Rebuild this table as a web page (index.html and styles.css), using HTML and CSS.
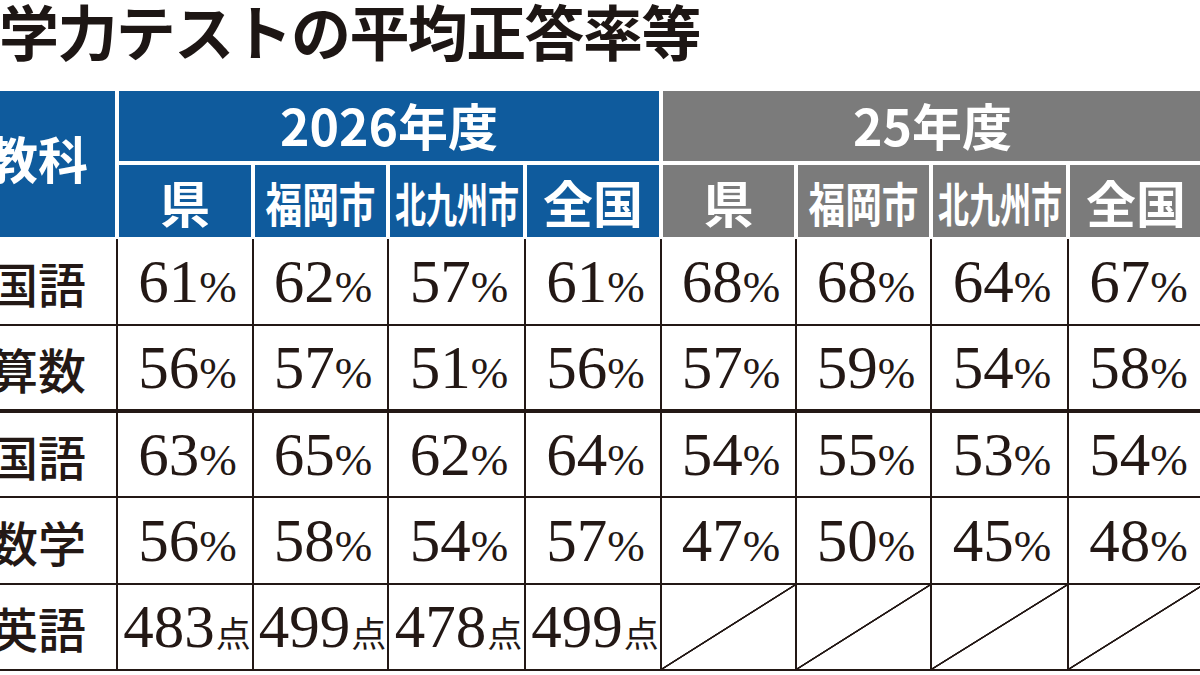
FILE: index.html
```html
<!DOCTYPE html>
<html lang="ja">
<head>
<meta charset="utf-8">
<title>学力テストの平均正答率等</title>
<link rel="stylesheet" href="styles.css">
</head>
<body>
<div class="page">
  <h1 class="title">学力テストの平均正答率等</h1>
  <div class="grid">
    <div class="hd blue subj">教科</div>
    <div class="hd blue year">2026年度</div>
    <div class="hd gray year">25年度</div>

    <div class="hd blue sub">県</div>
    <div class="hd blue sub"><span class="sq3">福岡市</span></div>
    <div class="hd blue sub"><span class="sq4">北九州市</span></div>
    <div class="hd blue sub">全国</div>
    <div class="hd gray sub">県</div>
    <div class="hd gray sub"><span class="sq3">福岡市</span></div>
    <div class="hd gray sub"><span class="sq4">北九州市</span></div>
    <div class="hd gray sub">全国</div>

    <div class="d lbl">国語</div>
    <div class="d val"><span>61<i>%</i></span></div>
    <div class="d val"><span>62<i>%</i></span></div>
    <div class="d val"><span>57<i>%</i></span></div>
    <div class="d val"><span>61<i>%</i></span></div>
    <div class="d val"><span>68<i>%</i></span></div>
    <div class="d val"><span>68<i>%</i></span></div>
    <div class="d val"><span>64<i>%</i></span></div>
    <div class="d val"><span>67<i>%</i></span></div>

    <div class="d sep lbl">算数</div>
    <div class="d sep val"><span>56<i>%</i></span></div>
    <div class="d sep val"><span>57<i>%</i></span></div>
    <div class="d sep val"><span>51<i>%</i></span></div>
    <div class="d sep val"><span>56<i>%</i></span></div>
    <div class="d sep val"><span>57<i>%</i></span></div>
    <div class="d sep val"><span>59<i>%</i></span></div>
    <div class="d sep val"><span>54<i>%</i></span></div>
    <div class="d sep val"><span>58<i>%</i></span></div>

    <div class="d lbl">国語</div>
    <div class="d val"><span>63<i>%</i></span></div>
    <div class="d val"><span>65<i>%</i></span></div>
    <div class="d val"><span>62<i>%</i></span></div>
    <div class="d val"><span>64<i>%</i></span></div>
    <div class="d val"><span>54<i>%</i></span></div>
    <div class="d val"><span>55<i>%</i></span></div>
    <div class="d val"><span>53<i>%</i></span></div>
    <div class="d val"><span>54<i>%</i></span></div>

    <div class="d lbl">数学</div>
    <div class="d val"><span>56<i>%</i></span></div>
    <div class="d val"><span>58<i>%</i></span></div>
    <div class="d val"><span>54<i>%</i></span></div>
    <div class="d val"><span>57<i>%</i></span></div>
    <div class="d val"><span>47<i>%</i></span></div>
    <div class="d val"><span>50<i>%</i></span></div>
    <div class="d val"><span>45<i>%</i></span></div>
    <div class="d val"><span>48<i>%</i></span></div>

    <div class="d lbl">英語</div>
    <div class="d val"><span>483<b class="pt">点</b></span></div>
    <div class="d val"><span>499<b class="pt">点</b></span></div>
    <div class="d val"><span>478<b class="pt">点</b></span></div>
    <div class="d val"><span>499<b class="pt">点</b></span></div>
    <div class="d na"></div>
    <div class="d na"></div>
    <div class="d na"></div>
    <div class="d na"></div>
  </div>
</div>
</body>
</html>
```

FILE: styles.css
```css
* {
  box-sizing: border-box;
}

html,
body {
  margin: 0;
  background: #fff;
}

body {
  width: 1200px;
  height: 675px;
  overflow: hidden;
  font-family: "Noto Sans CJK JP", "Noto Sans", sans-serif;
  color: #231815;
}

.page {
  width: 1200px;
  height: 675px;
  overflow: hidden;
}

.title {
  margin: 0 0 0 -1px;
  height: 89px;
  font-size: 60px;
  line-height: 60px;
  font-weight: 700;
  letter-spacing: -1.6px;
  white-space: nowrap;
  color: #1d1614;
}

.grid {
  display: grid;
  margin-left: -41px;
  width: 1245px;
  grid-template-columns: 158px 136px 135px 137px 136px 135px 135px 137px 136px;
  grid-template-rows: 74px 76px 87px 87px 85px 87px 86px;
}

.hd {
  border: 2px solid #fff;
  color: #fff;
  font-weight: 700;
  display: flex;
  align-items: center;
  justify-content: center;
  white-space: nowrap;
}

.blue {
  background: #0f5b9d;
}

.gray {
  background: #7b7b7b;
}

.subj {
  grid-row: span 2;
  font-size: 50px;
  padding-bottom: 14px;
}

.year {
  grid-column: span 4;
  font-size: 50px;
  padding-bottom: 4px;
}

.sub {
  font-size: 50px;
}

.sq3,
.sq4 {
  display: inline-block;
  font-size: 47px;
}

.sq3 {
  transform: scaleX(0.78);
}

.sq4 {
  transform: scaleX(0.66);
}

.d {
  border-left: 1px solid #231815;
  border-right: 1px solid #231815;
  border-bottom: 2px solid #231815;
  display: flex;
  align-items: center;
  justify-content: center;
  white-space: nowrap;
}

.sep {
  border-bottom-width: 4px;
}

.lbl {
  font-size: 48px;
  font-weight: 500;
}

.val {
  font-family: "Liberation Serif", serif;
  font-size: 61px;
  padding-left: 4px;
}

.val i {
  font-style: normal;
  font-size: 45px;
  letter-spacing: -1px;
}

.val .pt {
  font-family: "Noto Sans CJK JP", sans-serif;
  font-size: 35px;
  font-weight: 400;
  padding-left: 1px;
}

.na {
  background: linear-gradient(to bottom right,
      transparent calc(50% - 1.2px),
      #231815 calc(50% - 0.6px),
      #231815 calc(50% + 0.6px),
      transparent calc(50% + 1.2px));
}
```
